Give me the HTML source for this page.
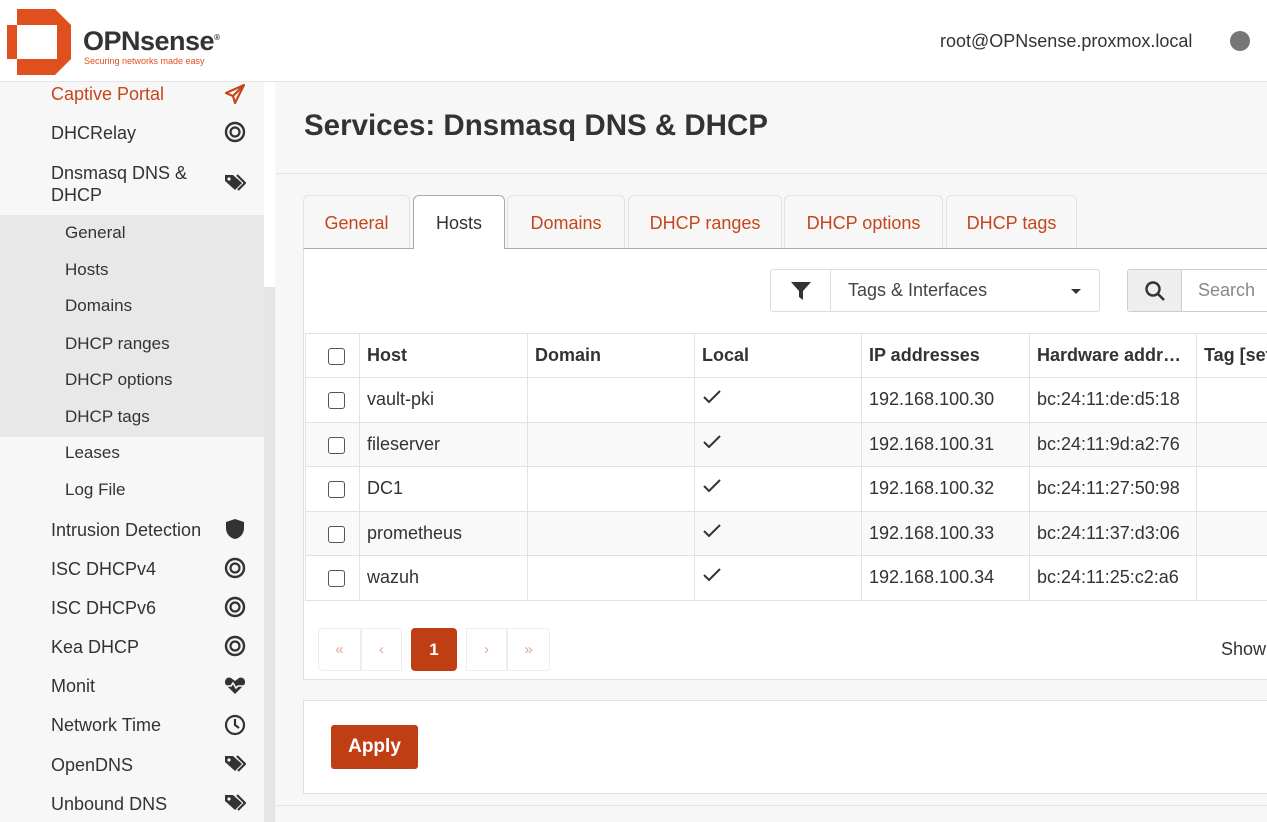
<!DOCTYPE html>
<html><head><meta charset="utf-8"><style>
*{box-sizing:border-box;margin:0;padding:0}
body{width:1267px;height:822px;overflow:hidden;font-family:"Source Sans Pro","Liberation Sans",sans-serif;color:#333;background:#f7f7f7;position:relative;font-size:17px}
.hdr{position:absolute;left:0;top:0;width:1267px;height:82px;background:#fff;border-bottom:1px solid #e6e6e6}
.side{position:absolute;left:0;top:82px;width:264px;height:740px;background:#f7f7f7}
.sb{position:absolute;left:264px;top:82px;width:11px;height:740px;background:#e5e5e5;border-right:1px solid #ddd}
.sb i{position:absolute;left:0;top:0;width:11px;height:205px;background:#fff}
.it{position:absolute;left:51px;font-size:18px;color:#333;line-height:22px}
.ic{position:absolute;left:224px;width:22px;height:22px}
.sub{position:absolute;left:0;top:215px;width:264px;height:222px;background:#e8e8e8}
.si{position:absolute;left:65px;font-size:17px;color:#333}
.main{position:absolute;left:276px;top:82px;width:991px;height:740px;background:#f7f7f7}
.title{position:absolute;left:304px;top:109px;font-size:29.5px;font-weight:bold;color:#333}
.tabs{position:absolute;left:303px;top:195px}
.tab{position:absolute;top:0;height:53px;border:1px solid #e2e2e2;border-bottom:none;border-radius:6px 6px 0 0;background:#f7f7f7;color:#c5461c;font-size:18px;text-align:center;line-height:54px}
.panel{position:absolute;left:303px;top:248px;width:970px;height:432px;background:#fff;border:1px solid #e0e0e0;border-top:1px solid #aaa}
table{position:absolute;left:305px;top:333px;border-collapse:collapse;font-size:18px;table-layout:fixed}
td{border:1px solid #e2e2e2;height:44.5px;padding-left:7px;color:#333}
th{border:1px solid #e2e2e2;height:44px;text-align:left;padding-left:7px;font-weight:bold;color:#333}
tr:nth-child(odd) td{background:#f9f9f9}
.cb{display:inline-block;width:17px;height:17px;border:1.5px solid #555;border-radius:3px;background:#fff;vertical-align:middle}
.pg{position:absolute;top:628px;height:43px;border:1px solid #eee;background:#fff;color:#e0a890;font-size:15px;text-align:center;line-height:41px}
</style></head><body>
<div class="hdr">
<svg style="position:absolute;left:7px;top:9px" width="66" height="66" viewBox="0 0 66 66"><path d="M10 0H48L64 16V50L48 66H10V50H50V16H10Z M0 16H10V50H0Z" fill="#e0501e"/><path d="M10 16H50V50H10Z" fill="#fff"/></svg>
<div style="position:absolute;left:83px;top:26px;font-size:27px;font-weight:bold;color:#333;letter-spacing:-0.5px">OPNsense<sup style="font-size:8px">®</sup></div>
<div style="position:absolute;left:84px;top:56px;font-size:9px;color:#e0501e">Securing networks made easy</div>
<div style="position:absolute;left:940px;top:31px;font-size:18px;color:#333">root@OPNsense.proxmox.local</div>
<div style="position:absolute;left:1230px;top:31px;width:20px;height:20px;border-radius:50%;background:#777"></div>
</div>
<div class="side"></div>
<div class="sub"></div>
<div class="sb"><i></i></div>
<div class="it" style="top:83px;color:#c5461c">Captive Portal</div>
<svg class="ic" style="top:83px" viewBox="0 0 22 22"><path d="M20 2L2 10l7 3 2 7z M9 13L20 2" fill="none" stroke="#c5461c" stroke-width="2.2" stroke-linejoin="round"/></svg>
<div class="it" style="top:122px">DHCRelay</div>
<div class="it" style="top:162px">Dnsmasq DNS &amp;<br>DHCP</div>
<div class="si" style="top:223px">General</div>
<div class="si" style="top:260px">Hosts</div>
<div class="si" style="top:296px">Domains</div>
<div class="si" style="top:334px">DHCP ranges</div>
<div class="si" style="top:370px">DHCP options</div>
<div class="si" style="top:407px">DHCP tags</div>
<div class="si" style="top:443px">Leases</div>
<div class="si" style="top:480px">Log File</div>
<div class="it" style="top:519px">Intrusion Detection</div>
<div class="it" style="top:558px">ISC DHCPv4</div>
<div class="it" style="top:597px">ISC DHCPv6</div>
<div class="it" style="top:636px">Kea DHCP</div>
<div class="it" style="top:675px">Monit</div>
<div class="it" style="top:714px">Network Time</div>
<div class="it" style="top:754px">OpenDNS</div>
<div class="it" style="top:793px">Unbound DNS</div>
<svg class="ic" style="top:121px" viewBox="0 0 22 22"><circle cx="11" cy="11" r="9" fill="none" stroke="#333" stroke-width="2.4"/><circle cx="11" cy="11" r="4.5" fill="none" stroke="#333" stroke-width="2.2"/></svg>
<svg class="ic" style="top:557px" viewBox="0 0 22 22"><circle cx="11" cy="11" r="9" fill="none" stroke="#333" stroke-width="2.4"/><circle cx="11" cy="11" r="4.5" fill="none" stroke="#333" stroke-width="2.2"/></svg>
<svg class="ic" style="top:596px" viewBox="0 0 22 22"><circle cx="11" cy="11" r="9" fill="none" stroke="#333" stroke-width="2.4"/><circle cx="11" cy="11" r="4.5" fill="none" stroke="#333" stroke-width="2.2"/></svg>
<svg class="ic" style="top:635px" viewBox="0 0 22 22"><circle cx="11" cy="11" r="9" fill="none" stroke="#333" stroke-width="2.4"/><circle cx="11" cy="11" r="4.5" fill="none" stroke="#333" stroke-width="2.2"/></svg>
<svg class="ic" style="top:172px" viewBox="0 0 22 22"><path d="M1 3h8l9 8-7 7-10-9z" fill="#333"/><path d="M13 3l8 8-7 7" fill="none" stroke="#333" stroke-width="2.2"/><circle cx="5" cy="7" r="1.6" fill="#f7f7f7"/></svg>
<svg class="ic" style="top:753px" viewBox="0 0 22 22"><path d="M1 3h8l9 8-7 7-10-9z" fill="#333"/><path d="M13 3l8 8-7 7" fill="none" stroke="#333" stroke-width="2.2"/><circle cx="5" cy="7" r="1.6" fill="#f7f7f7"/></svg>
<svg class="ic" style="top:792px" viewBox="0 0 22 22"><path d="M1 3h8l9 8-7 7-10-9z" fill="#333"/><path d="M13 3l8 8-7 7" fill="none" stroke="#333" stroke-width="2.2"/><circle cx="5" cy="7" r="1.6" fill="#f7f7f7"/></svg>
<svg class="ic" style="top:518px" viewBox="0 0 22 22"><path d="M11 1l9 3v6c0 6-4 10-9 11C6 20 2 16 2 10V4z" fill="#333"/></svg>
<svg class="ic" style="top:675px" viewBox="0 0 22 22"><path d="M11 19L2 10C-1 6 3 1 7 3l4 3 4-3c4-2 8 3 5 7z" fill="#333"/><path d="M1 11h6l2-3 3 5 2-2h7" fill="none" stroke="#f7f7f7" stroke-width="1.6"/></svg>
<svg class="ic" style="top:714px" viewBox="0 0 22 22"><circle cx="11" cy="11" r="9" fill="none" stroke="#333" stroke-width="2.2"/><path d="M11 5v6l4 3" fill="none" stroke="#333" stroke-width="2.2"/></svg>
<div class="main"><div style="position:absolute;left:0;top:91px;width:991px;height:1px;background:#e3e3e3"></div></div>
<div class="title">Services: Dnsmasq DNS &amp; DHCP</div>
<div class="panel"></div>
<div class="tabs">
<div class="tab" style="left:0;width:107px">General</div>
<div class="tab" style="left:110px;width:92px;background:#fff;color:#333;height:54px;border-color:#aaa">Hosts</div>
<div class="tab" style="left:204px;width:118px">Domains</div>
<div class="tab" style="left:325px;width:154px">DHCP ranges</div>
<div class="tab" style="left:481px;width:159px">DHCP options</div>
<div class="tab" style="left:643px;width:131px">DHCP tags</div>
</div>
<div style="position:absolute;left:770px;top:269px;width:330px;height:43px;border:1px solid #ddd;border-radius:3px;background:#fff">
<div style="position:absolute;left:59px;top:0;width:1px;height:41px;background:#ddd"></div>
<svg style="position:absolute;left:20px;top:12px" width="20" height="18" viewBox="0 0 20 18"><path d="M0 0h20l-8 9v9l-4-3V9z" fill="#333"/></svg>
<div style="position:absolute;left:77px;top:10px;font-size:18px;color:#444">Tags &amp; Interfaces</div>
<div style="position:absolute;left:300px;top:19px;border:5px solid transparent;border-top:5px solid #333"></div>
</div>
<div style="position:absolute;left:1127px;top:269px;width:150px;height:43px;border:1px solid #ccc;border-radius:3px;background:#fff">
<div style="position:absolute;left:0;top:0;width:54px;height:41px;background:#eee;border-right:1px solid #ccc"></div>
<svg style="position:absolute;left:16px;top:10px" width="22" height="22" viewBox="0 0 22 22"><circle cx="9" cy="9" r="6.5" fill="none" stroke="#333" stroke-width="2.4"/><path d="M14 14l6 6" stroke="#333" stroke-width="2.6"/></svg>
<div style="position:absolute;left:70px;top:10px;font-size:18px;color:#888">Search</div>
</div>
<table style="width:972px">
<colgroup><col style="width:54px"><col style="width:168px"><col style="width:167px"><col style="width:167px"><col style="width:168px"><col style="width:167px"><col style="width:81px"></colgroup>
<tr><th style="padding-left:22px"><span class="cb"></span></th><th>Host</th><th>Domain</th><th>Local</th><th>IP addresses</th><th>Hardware addr…</th><th style="white-space:nowrap;overflow:hidden">Tag [set</th></tr>
<tr><td style="padding-left:22px"><span class="cb"></span></td><td>vault-pki</td><td></td><td><svg width="20" height="16" viewBox="0 0 20 16"><path d="M2 8l5 5L18 2" fill="none" stroke="#333" stroke-width="2"/></svg></td><td>192.168.100.30</td><td>bc:24:11:de:d5:18</td><td></td></tr>
<tr><td style="padding-left:22px"><span class="cb"></span></td><td>fileserver</td><td></td><td><svg width="20" height="16" viewBox="0 0 20 16"><path d="M2 8l5 5L18 2" fill="none" stroke="#333" stroke-width="2"/></svg></td><td>192.168.100.31</td><td>bc:24:11:9d:a2:76</td><td></td></tr>
<tr><td style="padding-left:22px"><span class="cb"></span></td><td>DC1</td><td></td><td><svg width="20" height="16" viewBox="0 0 20 16"><path d="M2 8l5 5L18 2" fill="none" stroke="#333" stroke-width="2"/></svg></td><td>192.168.100.32</td><td>bc:24:11:27:50:98</td><td></td></tr>
<tr><td style="padding-left:22px"><span class="cb"></span></td><td>prometheus</td><td></td><td><svg width="20" height="16" viewBox="0 0 20 16"><path d="M2 8l5 5L18 2" fill="none" stroke="#333" stroke-width="2"/></svg></td><td>192.168.100.33</td><td>bc:24:11:37:d3:06</td><td></td></tr>
<tr><td style="padding-left:22px"><span class="cb"></span></td><td>wazuh</td><td></td><td><svg width="20" height="16" viewBox="0 0 20 16"><path d="M2 8l5 5L18 2" fill="none" stroke="#333" stroke-width="2"/></svg></td><td>192.168.100.34</td><td>bc:24:11:25:c2:a6</td><td></td></tr>
</table>
<div class="pg" style="left:318px;width:43px;border-radius:4px 0 0 4px">«</div>
<div class="pg" style="left:361px;width:41px">‹</div>
<div class="pg" style="left:411px;width:46px;background:#c03e14;border-color:#c03e14;color:#fff;font-weight:bold;font-size:17px;border-radius:4px">1</div>
<div class="pg" style="left:466px;width:41px">›</div>
<div class="pg" style="left:507px;width:43px;border-radius:0 4px 4px 0">»</div>
<div style="position:absolute;left:1221px;top:639px;font-size:18px;color:#333">Show</div>
<div style="position:absolute;left:303px;top:700px;width:970px;height:94px;background:#fff;border:1px solid #e0e0e0"></div>
<div style="position:absolute;left:331px;top:725px;width:87px;height:44px;background:#c03e14;border-radius:3px;color:#fff;font-weight:bold;font-size:19px;text-align:center;line-height:44px">Apply</div>
<div style="position:absolute;left:276px;top:805px;width:991px;height:1px;background:#e3e3e3"></div>
</body></html>
